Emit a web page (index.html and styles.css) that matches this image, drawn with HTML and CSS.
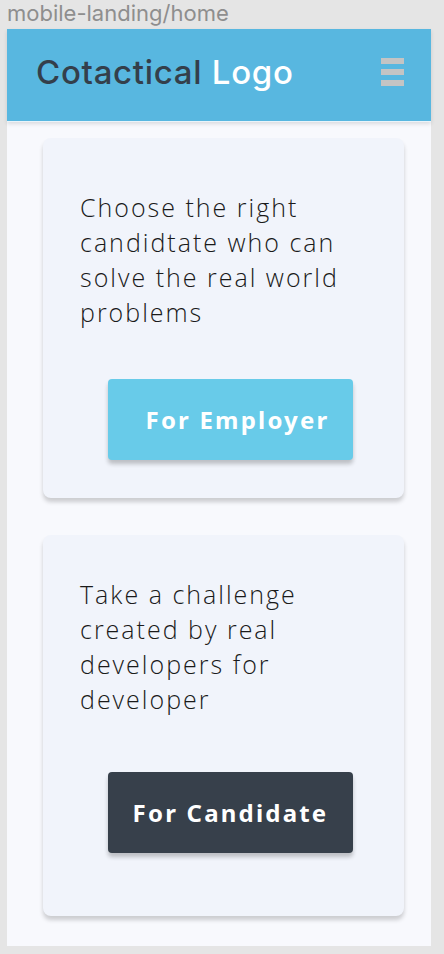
FILE: index.html
```html
<!DOCTYPE html>
<html lang="en">
<head>
<meta charset="utf-8">
<title>mobile-landing/home</title>
<link rel="stylesheet" href="styles.css">
</head>
<body>
<div class="frame-label">mobile-landing/home</div>
<div class="frame">
  <header class="topbar">
    <div class="brand"><span class="brand-dark">Cotactical</span> <span class="brand-light">Logo</span></div>
    <div class="burger" aria-label="menu">
      <span></span><span></span><span></span>
    </div>
  </header>
  <main class="content">
    <section class="card card-employer">
      <p class="card-text">Choose the right candidtate who can solve the real world problems</p>
      <button class="btn btn-employer">For Employer</button>
    </section>
    <section class="card card-candidate">
      <p class="card-text">Take a challenge created by real developers for developer</p>
      <button class="btn btn-candidate">For Candidate</button>
    </section>
  </main>
</div>
</body>
</html>
```
FILE: styles.css
```css
* { box-sizing: border-box; }
html, body { margin: 0; padding: 0; }
body {
  background: #e5e5e5;
  width: 444px;
  height: 954px;
  overflow: hidden;
  font-family: Inter, Roboto, "Liberation Sans", sans-serif;
}
.frame-label {
  height: 29px;
  padding-left: 7px;
  padding-top: 0;
  font-size: 22px;
  line-height: 27px;
  color: #8e8e8e;
}
.frame {
  margin-left: 7px;
  width: 424px;
  height: 917px;
  background: #f8f9fd;
  display: flex;
  flex-direction: column;
}
.topbar {
  height: 93px;
  background: #58b7e0;
  border-bottom: 1px solid #eaf4fa;
  box-shadow: 0 2px 4px rgba(0,0,0,0.12);
  display: flex;
  align-items: center;
  justify-content: space-between;
  padding: 0 27px 0 29px;
  flex: none;
}
.brand {
  font-family: Inter, Roboto, sans-serif;
  font-weight: 500;
  font-size: 33px;
  letter-spacing: 0.7px;
  margin-top: -6px;
}
.brand-dark { color: #343f4b; }
.brand-light { color: #ffffff; }
.burger {
  display: flex;
  flex-direction: column;
  gap: 5px;
  margin-top: -6px;
}
.burger span {
  display: block;
  width: 23px;
  height: 6px;
  background: #c4c4c4;
}
.content {
  padding: 16px 27px 0 36px;
  display: flex;
  flex-direction: column;
  gap: 37px;
}
.card {
  background: #f1f4fb;
  border-radius: 8px;
  box-shadow: 0 4px 4px rgba(0,0,0,0.18);
  display: flex;
  flex-direction: column;
  align-items: flex-start;
  padding-left: 37px;
}
.card-employer { height: 360px; padding-top: 52px; }
.card-candidate { height: 381px; padding-top: 42px; }
.card-text {
  margin: 0;
  width: 310px;
  font-family: "Open Sans", "Noto Sans", sans-serif;
  font-weight: 350;
  font-size: 25px;
  line-height: 35px;
  letter-spacing: 2px;
  color: #1a1a1a;
}
.btn {
  margin-left: 28px;
  width: 245px;
  height: 81px;
  border: none;
  border-radius: 4px;
  color: #ffffff;
  font-family: "Noto Sans", "Open Sans", sans-serif;
  font-weight: 700;
  font-size: 24px;
  letter-spacing: 2.2px;
  box-shadow: 0 4px 4px rgba(0,0,0,0.22);
  padding: 0;
}
.btn-employer { background: #68cbe9; margin-top: 49px; padding-left: 14px; }
.btn-candidate { background: #37404b; margin-top: 55px; }
```
